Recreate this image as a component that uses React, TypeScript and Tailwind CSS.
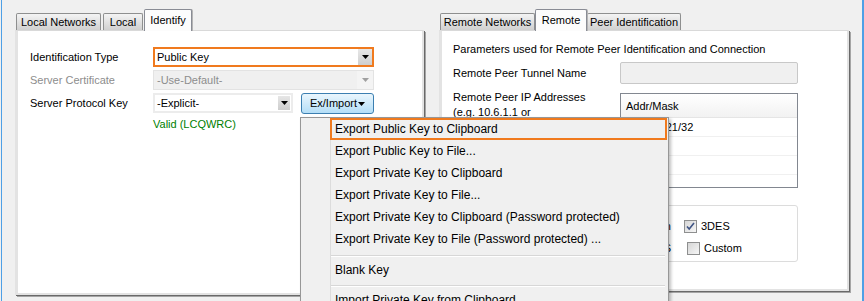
import React from 'react';

const FONT = "font-['Liberation_Sans',Arial,sans-serif]";

function Arrow({ disabled }: { disabled?: boolean }) {
  return (
    <svg width="7" height="4" viewBox="0 0 7 4">
      <path d="M0 0h7L3.5 4z" fill={disabled ? '#a0a0a0' : '#000'} />
    </svg>
  );
}

function Tab({ label, className, active }: { label: string; className: string; active?: boolean }) {
  if (active) {
    return (
      <div
        className={`relative z-10 -mb-px flex h-[22px] items-center justify-center rounded-t-[2px] border border-b-0 border-[#898c95] bg-[#fcfcfc] shadow-[1px_0_0_0_#b5b5b5] ${className}`}
      >
        {label}
      </div>
    );
  }
  return (
    <div
      className={`flex h-[17px] items-center justify-center rounded-t-[2px] border border-b-0 border-[#8e8f8f] bg-gradient-to-b from-[#f4f4f4] to-[#d0d0d0] ${className}`}
    >
      {label}
    </div>
  );
}

function CheckBox({ checked }: { checked?: boolean }) {
  return (
    <div className="flex h-[13px] w-[13px] shrink-0 items-center justify-center border border-[#8e8f8f] bg-gradient-to-br from-[#d6d6d6] to-[#f6f6f6]">
      {checked && (
        <svg width="9" height="9" viewBox="0 0 9 9">
          <path d="M1 4.5l2.2 2.6L8 1" fill="none" stroke="#3f5484" strokeWidth="1.6" />
        </svg>
      )}
    </div>
  );
}

const menuItems = [
  'Export Public Key to Clipboard',
  'Export Public Key to File...',
  'Export Private Key to Clipboard',
  'Export Private Key to File...',
  'Export Private Key to Clipboard (Password protected)',
  'Export Private Key to File (Password protected) ...',
];

function MenuItem({ label, hot }: { label: string; hot?: boolean }) {
  return (
    <div
      className={`-ml-px mr-px h-[22px] border-2 pl-[3px] leading-[18px] whitespace-nowrap ${
        hot ? 'border-[#f07a1e]' : 'border-transparent'
      }`}
    >
      {label}
    </div>
  );
}

function Separator({ top }: { top: string }) {
  return (
    <div className={`${top} mr-[3px]`}>
      <div className="h-px bg-[#d7d7d7]" />
      <div className="h-px bg-white" />
    </div>
  );
}

export default function App() {
  return (
    <div className={`relative h-[301px] w-[864px] overflow-hidden bg-[#f0f0f0] text-[11px] text-black ${FONT}`}>
      <div className="ml-px flex h-full w-[863px] border-l border-r-2 border-[#4fa0e6]">
        <div className="flex gap-[15px] pl-[13px] pt-[9px]">
          {/* Left tab control */}
          <div className="flex w-[409px] flex-col">
            <div className="flex h-[21px] items-end pl-px">
              <Tab label="Local Networks" className="w-[85px]" />
              <Tab label="Local" className="ml-[2px] w-[40px]" />
              <Tab label="Identify" className="ml-px w-[48px]" active />
            </div>
            <div className="h-[265px] border-b-2 border-l-[3px] border-r-2 border-t border-b-[#e3e3e3] border-l-[#e3e3e3] border-r-[#e3e3e3] border-t-[#d9d9d9] bg-white pl-[12px] pt-[16px] shadow-[1px_1px_0_0_#696969,2px_2px_0_0_#a5a5a5]">
              <div className="flex h-[20px] items-center">
                <div className="w-[123px]">Identification Type</div>
                <div className="flex h-[20px] w-[221px] items-center border-2 border-[#f07a1e] pl-[2px]">
                  <span>Public Key</span>
                  <div className="ml-auto flex h-[16px] w-[14px] items-center justify-center bg-gradient-to-b from-[#e8e8e8] to-[#cfcfcf]">
                    <Arrow />
                  </div>
                </div>
              </div>
              <div className="mt-[3px] flex h-[20px] items-center">
                <div className="w-[123px] text-[#8d8d8d]">Server Certificate</div>
                <div className="flex h-[20px] w-[221px] items-center border border-[#e3e3e3] bg-[#f0f0f0] pl-[3px] text-[#8d8d8d]">
                  <span>-Use-Default-</span>
                  <div className="ml-auto flex h-[18px] w-[16px] items-center justify-center bg-[#f4f4f4]">
                    <Arrow disabled />
                  </div>
                </div>
              </div>
              <div className="mt-[3px] flex items-start">
                <div className="flex h-[20px] w-[123px] items-center">Server Protocol Key</div>
                <div className="flex h-[20px] w-[140px] items-center border-2 border-[#ececec] pl-[2px]">
                  <span>-Explicit-</span>
                  <div className="ml-auto mr-px flex h-[14px] w-[12px] items-center justify-center bg-gradient-to-b from-[#e6e6e6] to-[#cdcdcd]">
                    <Arrow />
                  </div>
                </div>
                <div className="ml-[8px] flex h-[21px] w-[73px] items-center justify-center gap-px rounded-[3px] border border-[#3c7fb1] bg-gradient-to-b from-[#eaf6fd] to-[#b4def7]">
                  <span>Ex/Import</span>
                  <Arrow />
                </div>
              </div>
              <div className="mt-[3px] pl-[123px] leading-[14px] text-[#008000]">Valid (LCQWRC)</div>
            </div>
          </div>

          {/* Right tab control */}
          <div className="flex w-[410px] flex-col">
            <div className="flex h-[21px] items-end pl-px">
              <Tab label="Remote Networks" className="w-[95px]" />
              <Tab label="Remote" className="w-[52px]" active />
              <Tab label="Peer Identification" className="w-[94px]" />
            </div>
            <div className="h-[261px] border-b-2 border-l-[3px] border-r-2 border-t border-b-[#e3e3e3] border-l-[#e3e3e3] border-r-[#e3e3e3] border-t-[#d9d9d9] bg-white pl-[11px] pt-[11px] shadow-[1px_1px_0_0_#696969,2px_2px_0_0_#a5a5a5]">
              <div className="h-[14px] leading-[14px] whitespace-nowrap">
                Parameters used for Remote Peer Identification and Connection
              </div>
              <div className="mt-[6px] flex h-[22px] items-center">
                <div className="w-[167px]">Remote Peer Tunnel Name</div>
                <div className="h-[22px] w-[178px] rounded-[2px] border border-[#c8c8c8] bg-[#f0f0f0]" />
              </div>
              <div className="mt-[6px] flex items-start">
                <div className="w-[167px] leading-[15px]">
                  <div>Remote Peer IP Addresses</div>
                  <div>(e.g. 10.6.1.1 or</div>
                </div>
                <div className="mt-[3px] h-[95px] w-[178px] overflow-hidden border border-[#828790] bg-white">
                  <div className="h-[24px] border-b border-[#e5e5e5] bg-gradient-to-b from-white to-[#f2f2f2] pl-[5px] leading-[24px]">
                    Addr/Mask
                  </div>
                  <div className="h-[19px] border-b border-[#f0f0f0] pl-[5px] leading-[18px]">10.6.1.121/32</div>
                  <div className="h-[19px] border-b border-[#f0f0f0]" />
                  <div className="h-[19px] border-b border-[#f0f0f0]" />
                </div>
              </div>
              <div className="mt-[17px] h-[57px] w-[345px] rounded-[3px] border border-[#dcdcdc] pt-[12px]">
                <div className="flex h-[16px] items-center">
                  <div className="w-[217px] text-right">Encryption</div>
                  <div className="ml-[13px] flex items-center">
                    <CheckBox checked />
                    <span className="ml-[4px]">3DES</span>
                  </div>
                </div>
                <div className="mt-[6px] flex h-[16px] items-center">
                  <div className="w-[217px] text-right">AES</div>
                  <div className="ml-[16px] flex items-center">
                    <CheckBox />
                    <span className="ml-[4px]">Custom</span>
                  </div>
                </div>
              </div>
            </div>
          </div>
        </div>
      </div>

      {/* Ex/Import drop-down menu */}
      <div className="absolute left-[300px] top-[117px] flex h-[200px] w-[369px] border border-[#979797] bg-[#f0f0f0] text-[12px] shadow-[2px_2px_3px_rgba(0,0,0,0.25)]">
        <div className="w-[30px] shrink-0 border-r border-[#dcdcdc]" />
        <div className="flex-1">
          {menuItems.map((m, i) => (
            <MenuItem key={m} label={m} hot={i === 0} />
          ))}
          <div className="h-[9px]">
            <Separator top="pt-[5px]" />
          </div>
          <MenuItem label="Blank Key" />
          <div className="h-[8px]">
            <Separator top="pt-[4px]" />
          </div>
          <MenuItem label="Import Private Key from Clipboard" />
        </div>
      </div>
    </div>
  );
}
